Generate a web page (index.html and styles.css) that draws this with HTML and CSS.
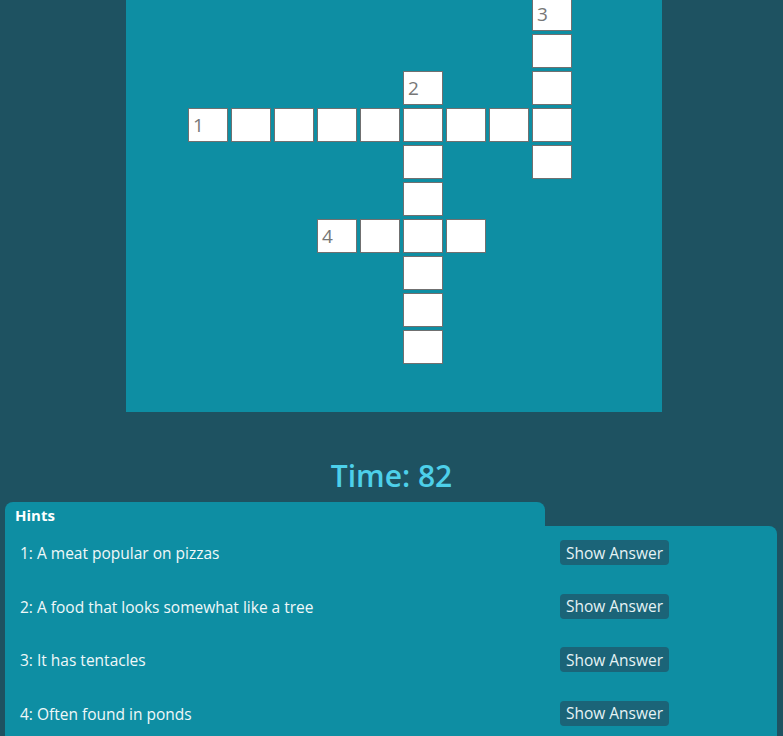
FILE: index.html
```html
<!DOCTYPE html>
<html lang="en">
<head>
<meta charset="utf-8">
<title>Crossword</title>
<link rel="stylesheet" href="styles.css">
</head>
<body>
<div class="board">
  <div class="grid">
    <div class="cell" style="grid-area: 1 / 9"><span class="num">3</span></div>
    <div class="cell" style="grid-area: 2 / 9"></div>
    <div class="cell" style="grid-area: 3 / 6"><span class="num">2</span></div>
    <div class="cell" style="grid-area: 3 / 9"></div>
    <div class="cell" style="grid-area: 4 / 1"><span class="num">1</span></div>
    <div class="cell" style="grid-area: 4 / 2"></div>
    <div class="cell" style="grid-area: 4 / 3"></div>
    <div class="cell" style="grid-area: 4 / 4"></div>
    <div class="cell" style="grid-area: 4 / 5"></div>
    <div class="cell" style="grid-area: 4 / 6"></div>
    <div class="cell" style="grid-area: 4 / 7"></div>
    <div class="cell" style="grid-area: 4 / 8"></div>
    <div class="cell" style="grid-area: 4 / 9"></div>
    <div class="cell" style="grid-area: 5 / 6"></div>
    <div class="cell" style="grid-area: 5 / 9"></div>
    <div class="cell" style="grid-area: 6 / 6"></div>
    <div class="cell" style="grid-area: 7 / 4"><span class="num">4</span></div>
    <div class="cell" style="grid-area: 7 / 5"></div>
    <div class="cell" style="grid-area: 7 / 6"></div>
    <div class="cell" style="grid-area: 7 / 7"></div>
    <div class="cell" style="grid-area: 8 / 6"></div>
    <div class="cell" style="grid-area: 9 / 6"></div>
    <div class="cell" style="grid-area: 10 / 6"></div>
  </div>
</div>
<div class="timer">Time: 82</div>
<div class="hints">
  <div class="hints-tab">Hints</div>
  <div class="hints-body">
    <div class="hint-row"><span class="hint-text">1: A meat popular on pizzas</span><button class="show-btn">Show Answer</button></div>
    <div class="hint-row"><span class="hint-text">2: A food that looks somewhat like a tree</span><button class="show-btn">Show Answer</button></div>
    <div class="hint-row"><span class="hint-text">3: It has tentacles</span><button class="show-btn">Show Answer</button></div>
    <div class="hint-row"><span class="hint-text">4: Often found in ponds</span><button class="show-btn">Show Answer</button></div>
  </div>
</div>
</body>
</html>
```
FILE: styles.css
```css
html, body {
  margin: 0;
  padding: 0;
}
body {
  background: #1e5261;
  font-family: "Open Sans", "Noto Sans", sans-serif;
  color: #eef7f8;
  overflow: hidden;
}
.board {
  width: 536px;
  height: 412px;
  margin-left: 126px;
  background: #0e8ea3;
  display: flex;
  flex-direction: column;
  overflow: hidden;
}
.grid {
  display: grid;
  grid-template-columns: repeat(9, 40px);
  grid-auto-rows: 34px;
  gap: 3px;
  margin-top: -3px;
  padding-left: 62px;
}
.cell {
  background: #ffffff;
  border: 1px solid #707070;
  box-sizing: border-box;
  display: flex;
  align-items: center;
}
.num {
  font-size: 19px;
  font-weight: 400;
  color: #777777;
  padding-left: 4px;
  line-height: 1;
}
.timer {
  text-align: center;
  font-size: 30px;
  font-weight: 600;
  color: #4dd0ea;
  padding-top: 43px;
  height: 47px;
  line-height: 41px;
}
.hints {
  margin: 0 6px 0 5px;
}
.hints-tab {
  width: 540px;
  height: 24px;
  box-sizing: border-box;
  background: #0e8ea3;
  border-radius: 8px 8px 0 0;
  font-size: 15px;
  font-weight: 700;
  color: #ffffff;
  padding-left: 10px;
  line-height: 27px;
}
.hints-body {
  background: #0e8ea3;
  border-radius: 0 8px 0 0;
  height: 220px;
}
.hint-row {
  display: grid;
  grid-template-columns: 540px auto;
  align-items: center;
  height: 53.5px;
  padding-left: 15px;
  font-size: 15.5px;
}
.hint-text {
  color: #f0f8f9;
  padding-top: 1px;
}
.show-btn {
  justify-self: start;
  font-family: inherit;
  font-size: 15.5px;
  color: #e6f3f5;
  background: #1b6478;
  border: none;
  border-radius: 4px;
  height: 25px;
  width: 109px;
  padding: 0;
}
```
